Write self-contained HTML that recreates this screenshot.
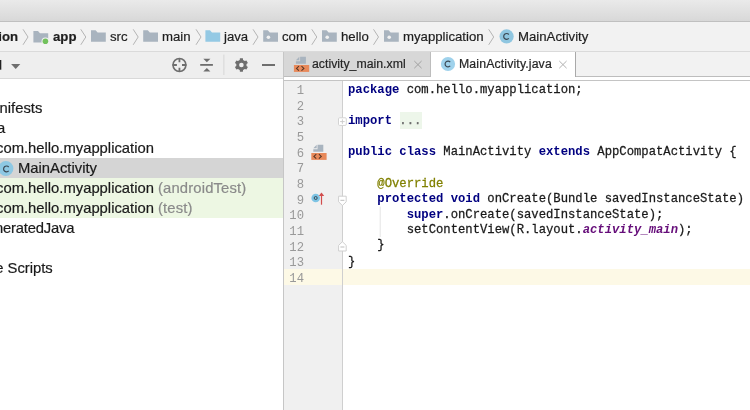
<!DOCTYPE html>
<html><head><meta charset="utf-8"><style>
*{margin:0;padding:0;box-sizing:border-box}
html,body{width:750px;height:410px;overflow:hidden;background:#fff;font-family:"Liberation Sans",sans-serif}
.a{position:absolute;white-space:nowrap}
.cr,.tb,.tr,.code,.ln{will-change:transform}
#title{left:0;top:0;width:750px;height:21px;background:linear-gradient(#eaeaea,#d8d8d8)}
#titleb{left:0;top:21px;width:750px;height:1px;background:#c0c0c0}
#crumb{left:0;top:22px;width:750px;height:29px;background:#f2f2f2}
#crumbb{left:0;top:51px;width:750px;height:1px;background:#dadada}
#tool{left:0;top:52px;width:283px;height:26px;background:#eeeeee}
#toolb{left:0;top:78px;width:283px;height:1px;background:#d9d9d9}
#split{left:283px;top:52px;width:1px;height:358px;background:#c6c6c6}
.cr{-webkit-text-stroke:0.2px;font-size:13.2px;color:#1e1e1e;top:29px;line-height:16px}
.tb{-webkit-text-stroke:0.2px;font-size:12.3px;color:#262626;top:56px;line-height:16px}
.tr{-webkit-text-stroke:0.2px;font-size:14.8px;color:#1a1a1a;line-height:18px}
.g{color:#8a8a8a;letter-spacing:0.15px}
#tabbar{left:284px;top:52px;width:466px;height:24px;background:#f2f2f2}
#tabbarb{left:284px;top:76px;width:466px;height:1px;background:#bdbdbd}
#tab1{left:284px;top:52px;width:147px;height:25px;background:#d7d7d7;border-right:1px solid #bdbdbd;border-bottom:1px solid #bdbdbd}
#tab2{left:431px;top:52px;width:145px;height:25px;background:#fff;border-right:1px solid #a9a9a9}
#strip{left:284px;top:77px;width:466px;height:3px;background:#fff}
#stripb{left:284px;top:80px;width:466px;height:1px;background:#c4c4c4}
#gutter{left:284px;top:81px;width:58px;height:330px;background:#f0f0f0}
#gutterb{left:342px;top:81px;width:1px;height:330px;background:#cfcfcf}
.ln{font-family:"Liberation Mono",monospace;font-size:12.23px;color:#999;line-height:15.65px;text-align:right;width:20px;left:284px}
.code{-webkit-text-stroke:0.25px;white-space:pre;font-family:"Liberation Mono",monospace;font-size:12.23px;color:#1a1a1a;line-height:14.444px;left:348px;transform:scaleY(1.08);transform-origin:0 0}
.k{color:#000080;font-weight:bold;-webkit-text-stroke:0}
.an{color:#808000}
.it{color:#660e7a;font-weight:bold;font-style:italic;-webkit-text-stroke:0}
</style></head><body>
<div class="a" id="title"></div>
<div class="a" id="titleb"></div>
<div class="a" id="crumb"></div>
<div class="a" id="crumbb"></div>
<div class="a" id="tool"></div>
<div class="a" id="toolb"></div>
<div class="a cr" style="left:-72.5px;font-weight:bold">MyApplication</div>
<div class="a cr" style="left:53px;font-weight:bold">app</div>
<div class="a cr" style="left:110px">src</div>
<div class="a cr" style="left:162px">main</div>
<div class="a cr" style="left:224px">java</div>
<div class="a cr" style="left:282px">com</div>
<div class="a cr" style="left:341px">hello</div>
<div class="a cr" style="left:403px">myapplication</div>
<div class="a cr" style="left:518px">MainActivity</div>
<div class="a tr" style="left:-21px;top:99.2px">manifests</div>
<div class="a tr" style="left:-22.2px;top:119.2px">java</div>
<div class="a tr" style="left:-3.7px;top:139.2px">com.hello.myapplication</div>
<div class="a" style="left:0;top:158px;width:283px;height:20px;background:#d5d5d5"></div>
<div class="a tr" style="left:18px;top:159.2px">MainActivity</div>
<div class="a" style="left:0;top:178px;width:283px;height:40px;background:#edf7e3"></div>
<div class="a tr" style="left:-3.7px;top:179.2px">com.hello.myapplication <span class="g">(androidTest)</span></div>
<div class="a tr" style="left:-3.7px;top:199.2px">com.hello.myapplication <span class="g">(test)</span></div>
<div class="a tr" style="left:-21.4px;top:219px;letter-spacing:-0.2px">generatedJava</div>
<div class="a tr" style="left:-41.5px;top:259px">Gradle Scripts</div>
<div class="a" id="split"></div>
<div class="a" id="tabbar"></div>
<div class="a" id="tabbarb"></div>
<div class="a" id="tab1"></div>
<div class="a" id="tab2"></div>
<div class="a tb" style="left:312.4px">activity_main.xml</div>
<div class="a tb" style="left:459.3px;letter-spacing:0.13px">MainActivity.java</div>
<div class="a" id="strip"></div>
<div class="a" id="stripb"></div>
<div class="a" id="gutter"></div>
<div class="a" style="left:284px;top:269.3px;width:466px;height:15.6px;background:#fdf9e6"></div>
<div class="a" id="gutterb"></div>
<div class="a" style="left:400px;top:112px;width:22px;height:16.5px;background:#edf6ea"></div>
<div class="a ln" style="top:84.3px">1<br>2<br>3<br>5<br>6<br>7<br>8<br>9<br>10<br>11<br>12<br>13<br>14</div>
<pre class="a code" style="top:81.8px"><span class="k">package</span> com.hello.myapplication;

<span class="k">import</span> <span style="color:#6a6a6a">...</span>

<span class="k">public class</span> MainActivity <span class="k">extends</span> AppCompatActivity {

    <span class="an">@Override</span>
    <span class="k">protected void</span> onCreate(Bundle savedInstanceState) {
        <span class="k">super</span>.onCreate(savedInstanceState);
        setContentView(R.layout.<span class="it">activity_main</span>);
    }
}
</pre>

<svg class="a" style="left:0;top:0" width="750" height="410" viewBox="0 0 750 410">
<path transform="translate(33.4,31.0)" d="M0 0H4.6L6.6 2.2H14.8V11.5H0Z" fill="#a9b4bf"/>
<circle cx="45.4" cy="41.3" r="3.9" fill="#f1f1f1"/><circle cx="45.4" cy="41.3" r="2.8" fill="#72c15c"/>
<path transform="translate(91,30.3)" d="M0 0H4.6L6.6 2.2H14.8V11.5H0Z" fill="#a9b4bf"/>
<path transform="translate(143.2,30.3)" d="M0 0H4.6L6.6 2.2H14.8V11.5H0Z" fill="#a9b4bf"/>
<path transform="translate(205.4,30.3)" d="M0 0H4.6L6.6 2.2H14.8V11.5H0Z" fill="#94c9e4"/>
<path transform="translate(263.2,30.3)" d="M0 0H4.6L6.6 2.2H14.8V11.5H0Z" fill="#a9b4bf"/>
<circle cx="268.4" cy="37.3" r="1.8" fill="#f1f1f1"/>
<path transform="translate(322,30.3)" d="M0 0H4.6L6.6 2.2H14.8V11.5H0Z" fill="#a9b4bf"/>
<circle cx="327.2" cy="37.3" r="1.8" fill="#f1f1f1"/>
<path transform="translate(384,30.3)" d="M0 0H4.6L6.6 2.2H14.8V11.5H0Z" fill="#a9b4bf"/>
<circle cx="389.2" cy="37.3" r="1.8" fill="#f1f1f1"/>
<path d="M23 29.3L28 37L23 44.8" fill="none" stroke="#b4b4b4" stroke-width="1"/>
<path d="M80.8 29.3L85.8 37L80.8 44.8" fill="none" stroke="#b4b4b4" stroke-width="1"/>
<path d="M133.2 29.3L138.2 37L133.2 44.8" fill="none" stroke="#b4b4b4" stroke-width="1"/>
<path d="M196 29.3L201 37L196 44.8" fill="none" stroke="#b4b4b4" stroke-width="1"/>
<path d="M253 29.3L258 37L253 44.8" fill="none" stroke="#b4b4b4" stroke-width="1"/>
<path d="M311.8 29.3L316.8 37L311.8 44.8" fill="none" stroke="#b4b4b4" stroke-width="1"/>
<path d="M373.5 29.3L378.5 37L373.5 44.8" fill="none" stroke="#b4b4b4" stroke-width="1"/>
<path d="M488.7 29.3L493.7 37L488.7 44.8" fill="none" stroke="#b4b4b4" stroke-width="1"/>
<circle cx="506.6" cy="36.4" r="7.1" fill="#8fc6e0"/><path d="M508.80 34.50A2.90 2.90 0 1 0 508.80 38.30" fill="none" stroke="#3b4853" stroke-width="1.2"/>

<rect x="0" y="60" width="1.3" height="9.7" fill="#222"/>
<path d="M11.1 63.9H20.3L15.7 69Z" fill="#6e6e6e"/>
<circle cx="179.45" cy="65" r="6.45" fill="none" stroke="#6e6e6e" stroke-width="1.6"/>
<path d="M172.5 65H176.9M182 65H186.4M179.45 58V62.2M179.45 67.8V72" stroke="#6e6e6e" stroke-width="1.8"/>
<path d="M200.2 64.9H212.9" stroke="#6e6e6e" stroke-width="1.8"/>
<path d="M203.3 58.7H210.4L206.85 62.3Z M203.3 71.6H210.4L206.85 67.9Z" fill="#6e6e6e"/>
<rect x="223.4" y="54.6" width="1" height="20.4" fill="#d6d6d6"/>
<path d="M239.92 58.36L242.88 58.36L243.06 60.07L244.84 61.10L246.41 60.40L247.89 62.97L246.50 63.97L246.50 66.03L247.89 67.03L246.41 69.60L244.84 68.90L243.06 69.93L242.88 71.64L239.92 71.64L239.74 69.93L237.96 68.90L236.39 69.60L234.91 67.03L236.30 66.03L236.30 63.97L234.91 62.97L236.39 60.40L237.96 61.10L239.74 60.07ZM243.70000000000002 65A2.3 2.3 0 1 0 239.1 65A2.3 2.3 0 1 0 243.70000000000002 65Z" fill="#6e6e6e" fill-rule="evenodd"/>
<rect x="262" y="64" width="13" height="2" fill="#6e6e6e"/>
<path d="M295.9 60.3L299.29999999999995 56.7V60.3Z" fill="#a9b4bf"/><path d="M300.09999999999997 56.7H305.9V63.7H295.9V61.2H300.09999999999997Z" fill="#a9b4bf"/><rect x="293.9" y="65" width="15.3" height="6.9" fill="#e8895a"/><path d="M298.9 66.2L296.5 68.45L298.9 70.7M301.5 66.2L303.9 68.45L301.5 70.7" fill="none" stroke="#553626" stroke-width="1.05"/>
<path d="M414.3 61L421.6 68.2M421.6 61L414.3 68.2" stroke="#a0a0a0" stroke-width="1"/>
<circle cx="448" cy="64.0" r="7.1" fill="#9fd2ec"/><path d="M450.20 62.10A2.90 2.90 0 1 0 450.20 65.90" fill="none" stroke="#3b4853" stroke-width="1.2"/>

<path d="M559.3 61L566.6 68.2M566.6 61L559.3 68.2" stroke="#b0b0b0" stroke-width="1"/>
<circle cx="5.9" cy="168.5" r="7.5" fill="#8ec8e3"/><path d="M8.70 167.00A2.90 2.90 0 1 0 8.70 170.80" fill="none" stroke="#3b4853" stroke-width="1.2"/>

<path d="M313.3 148.3L316.7 144.7V148.3Z" fill="#a9b4bf"/><path d="M317.5 144.7H323.3V151.7H313.3V149.2H317.5Z" fill="#a9b4bf"/><rect x="311.3" y="153" width="15.3" height="6.9" fill="#e8895a"/><path d="M316.3 154.2L313.90000000000003 156.45L316.3 158.7M318.90000000000003 154.2L321.3 156.45L318.90000000000003 158.7" fill="none" stroke="#553626" stroke-width="1.05"/>
<circle cx="315.7" cy="198" r="4.3" fill="#7ec4e4"/><circle cx="315.7" cy="198" r="1.5" fill="none" stroke="#34404a" stroke-width="0.9"/>
<path d="M321.5 193.5V204.7" stroke="#d24d4d" stroke-width="1.2"/><path d="M318.8 196L321.5 192.6L324.2 196Z" fill="#d24d4d"/>
<rect x="338.5" y="117.8" width="7.8" height="7.6" rx="1" fill="#fff" stroke="#d3d3d3" stroke-width="1"/><path d="M340.1 121.6H344.7M342.4 119.3V123.9" stroke="#c8c8c8" stroke-width="0.9"/>
<path d="M338.6 196.2H346.2V201.8L342.4 205.5L338.6 201.8Z" fill="#fff" stroke="#cfcfcf" stroke-width="1"/><path d="M340.4 200.3H344.4" stroke="#bdbdbd" stroke-width="1"/>
<path d="M338.6 251H346.2V245.4L342.4 241.7L338.6 245.4Z" fill="#fff" stroke="#cfcfcf" stroke-width="1"/><path d="M340.4 247H344.4" stroke="#bdbdbd" stroke-width="1"/>
<rect x="379.7" y="206.5" width="1" height="30.5" fill="#e4e4e4"/>
</svg>
</body></html>
